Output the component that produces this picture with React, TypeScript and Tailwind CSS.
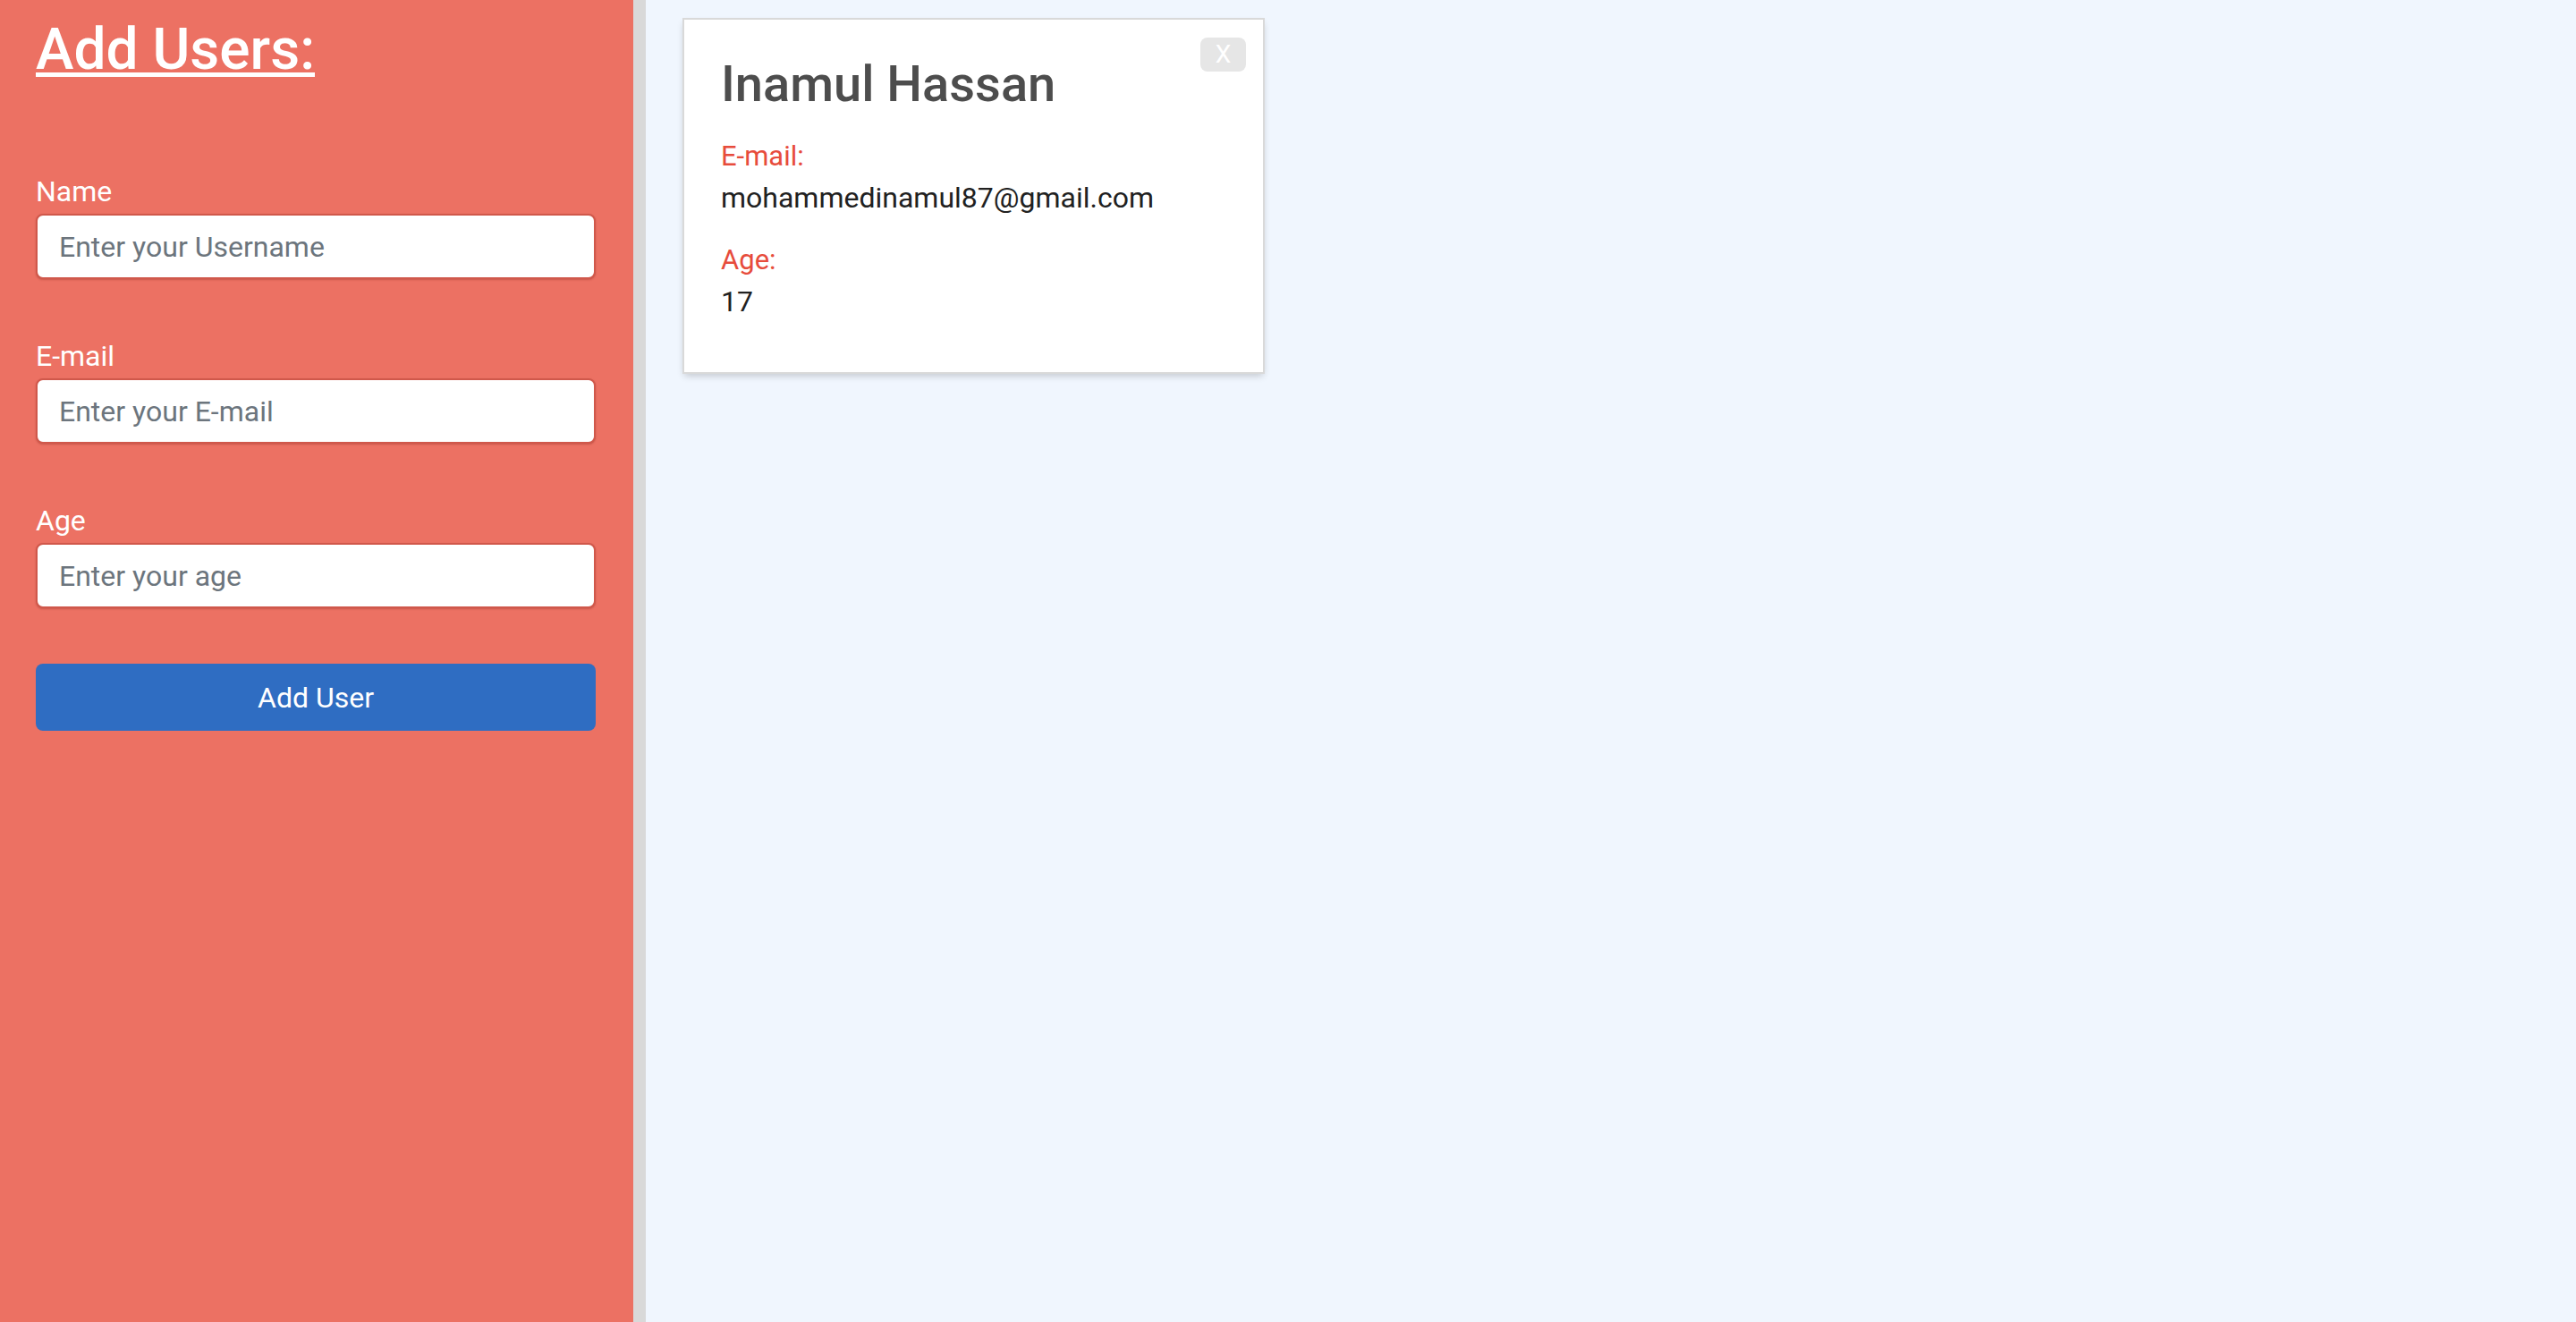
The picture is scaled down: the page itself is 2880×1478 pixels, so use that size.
import React from "react";

function Field({ label, placeholder, first }: { label: string; placeholder: string; first?: boolean }) {
  return (
    <div className={first ? "mt-[97px]" : "mt-[62px]"}>
      <label className="block text-[32px] leading-[48px] text-white">{label}</label>
      <input
        type="text"
        placeholder={placeholder}
        className="mt-[1px] block h-[73px] w-full rounded-[8px] border-2 border-[#d0584b] bg-white px-[24px] text-[32px] text-[#333] outline-none placeholder:text-[#6c757d] shadow-[0_1px_2px_rgba(120,30,20,0.3)]"
      />
    </div>
  );
}

export default function App() {
  return (
    <div className="flex h-screen w-full font-[Roboto,sans-serif] bg-[#f0f6fe]">
      <aside className="h-full w-[722px] shrink-0 border-r-[14px] border-[#d9d9d9] bg-[#ec7163] pl-[40px] pr-[42px] pt-[18px]">
        <h1 className="text-[64px] leading-[75px] font-medium text-white underline decoration-[5px] underline-offset-[4px]">
          Add Users:
        </h1>
        <Field first label="Name" placeholder="Enter your Username" />
        <Field label="E-mail" placeholder="Enter your E-mail" />
        <Field label="Age" placeholder="Enter your age" />
        <button className="mt-[62px] block h-[75px] w-full rounded-[8px] bg-[#2f6dc2] text-[32px] text-white">
          Add User
        </button>
      </aside>
      <main className="flex-1 pl-[43px] pt-[22px]">
        <div className="relative h-[394px] w-[647px] bg-white px-[41px] pt-[39px] shadow-[0_0_0_2px_#d9d9d9,0_4px_8px_rgba(0,0,0,0.2)]">
          <button className="absolute right-[19px] top-[20px] flex h-[38px] w-[51px] items-center justify-center rounded-[8px] bg-[#e6e6e6] text-[28px] leading-none text-white">
            X
          </button>
          <h2 className="text-[56px] leading-[66px] font-medium text-[#4d4d4d]">Inamul Hassan</h2>
          <div className="mt-[30px] text-[31px] leading-[36px] text-[#e74c3c]">E-mail:</div>
          <div className="mt-[9px] text-[32px] leading-[38px] text-[#212121]">mohammedinamul87@gmail.com</div>
          <div className="mt-[33px] text-[31px] leading-[36px] text-[#e74c3c]">Age:</div>
          <div className="mt-[9px] text-[32px] leading-[38px] text-[#212121]">17</div>
        </div>
      </main>
    </div>
  );
}
